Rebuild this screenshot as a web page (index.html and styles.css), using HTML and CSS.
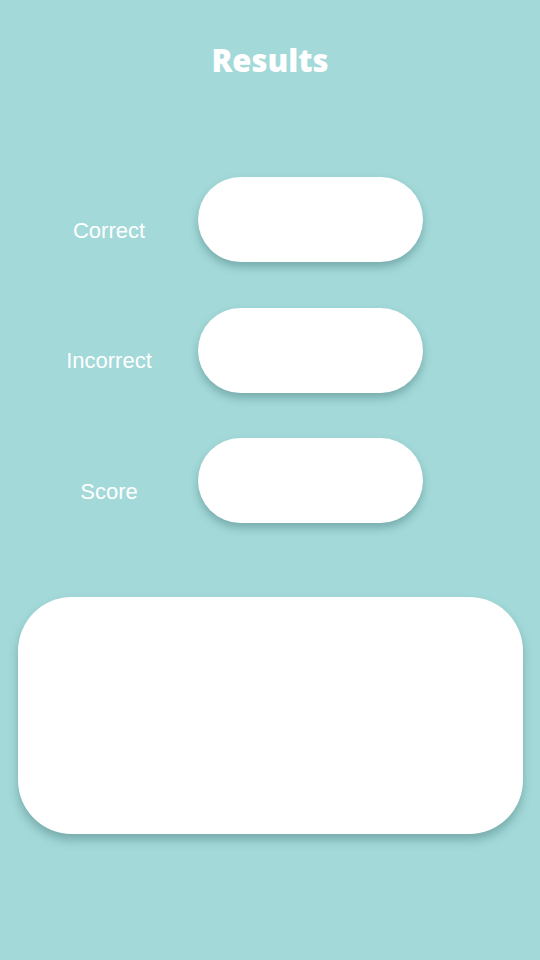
FILE: index.html
```html
<!DOCTYPE html>
<html>
<head>
<meta charset="utf-8">
<link rel="stylesheet" href="styles.css">
</head>
<body>
<div class="screen">
  <h1 class="title">Results</h1>
  <div class="rows">
    <div class="row">
      <div class="label">Correct</div>
      <div class="pill"></div>
    </div>
    <div class="row">
      <div class="label">Incorrect</div>
      <div class="pill"></div>
    </div>
    <div class="row">
      <div class="label">Score</div>
      <div class="pill"></div>
    </div>
  </div>
  <div class="card"></div>
</div>
</body>
</html>
```
FILE: styles.css
```css
html, body {
  margin: 0;
  padding: 0;
  background: #a3d9d9;
}
.screen {
  width: 540px;
  height: 960px;
  background: #a3d9d9;
  display: flex;
  flex-direction: column;
  font-family: "Liberation Sans", Arial, sans-serif;
  color: #fff;
}
.title {
  margin: 0;
  padding-top: 40px;
  height: 40px;
  line-height: 40px;
  text-align: center;
  font-family: "Open Sans", sans-serif;
  font-weight: 800;
  font-size: 31px;
}
.rows {
  margin-top: 97px;
  display: flex;
  flex-direction: column;
  gap: 45.5px;
}
.row {
  display: flex;
  align-items: center;
  padding-left: 20px;
}
.label {
  width: 178px;
  text-align: center;
  font-size: 22px;
  padding-top: 22px;
}
.pill {
  width: 225px;
  height: 85px;
  border-radius: 43px;
  background: #fff;
  box-shadow: 0 5px 8px rgba(40, 90, 90, 0.35);
}
.card {
  margin: 74px 0 0 18px;
  width: 505px;
  height: 237px;
  border-radius: 54px;
  background: #fff;
  box-shadow: 0 6px 10px rgba(40, 90, 90, 0.35);
}
```
